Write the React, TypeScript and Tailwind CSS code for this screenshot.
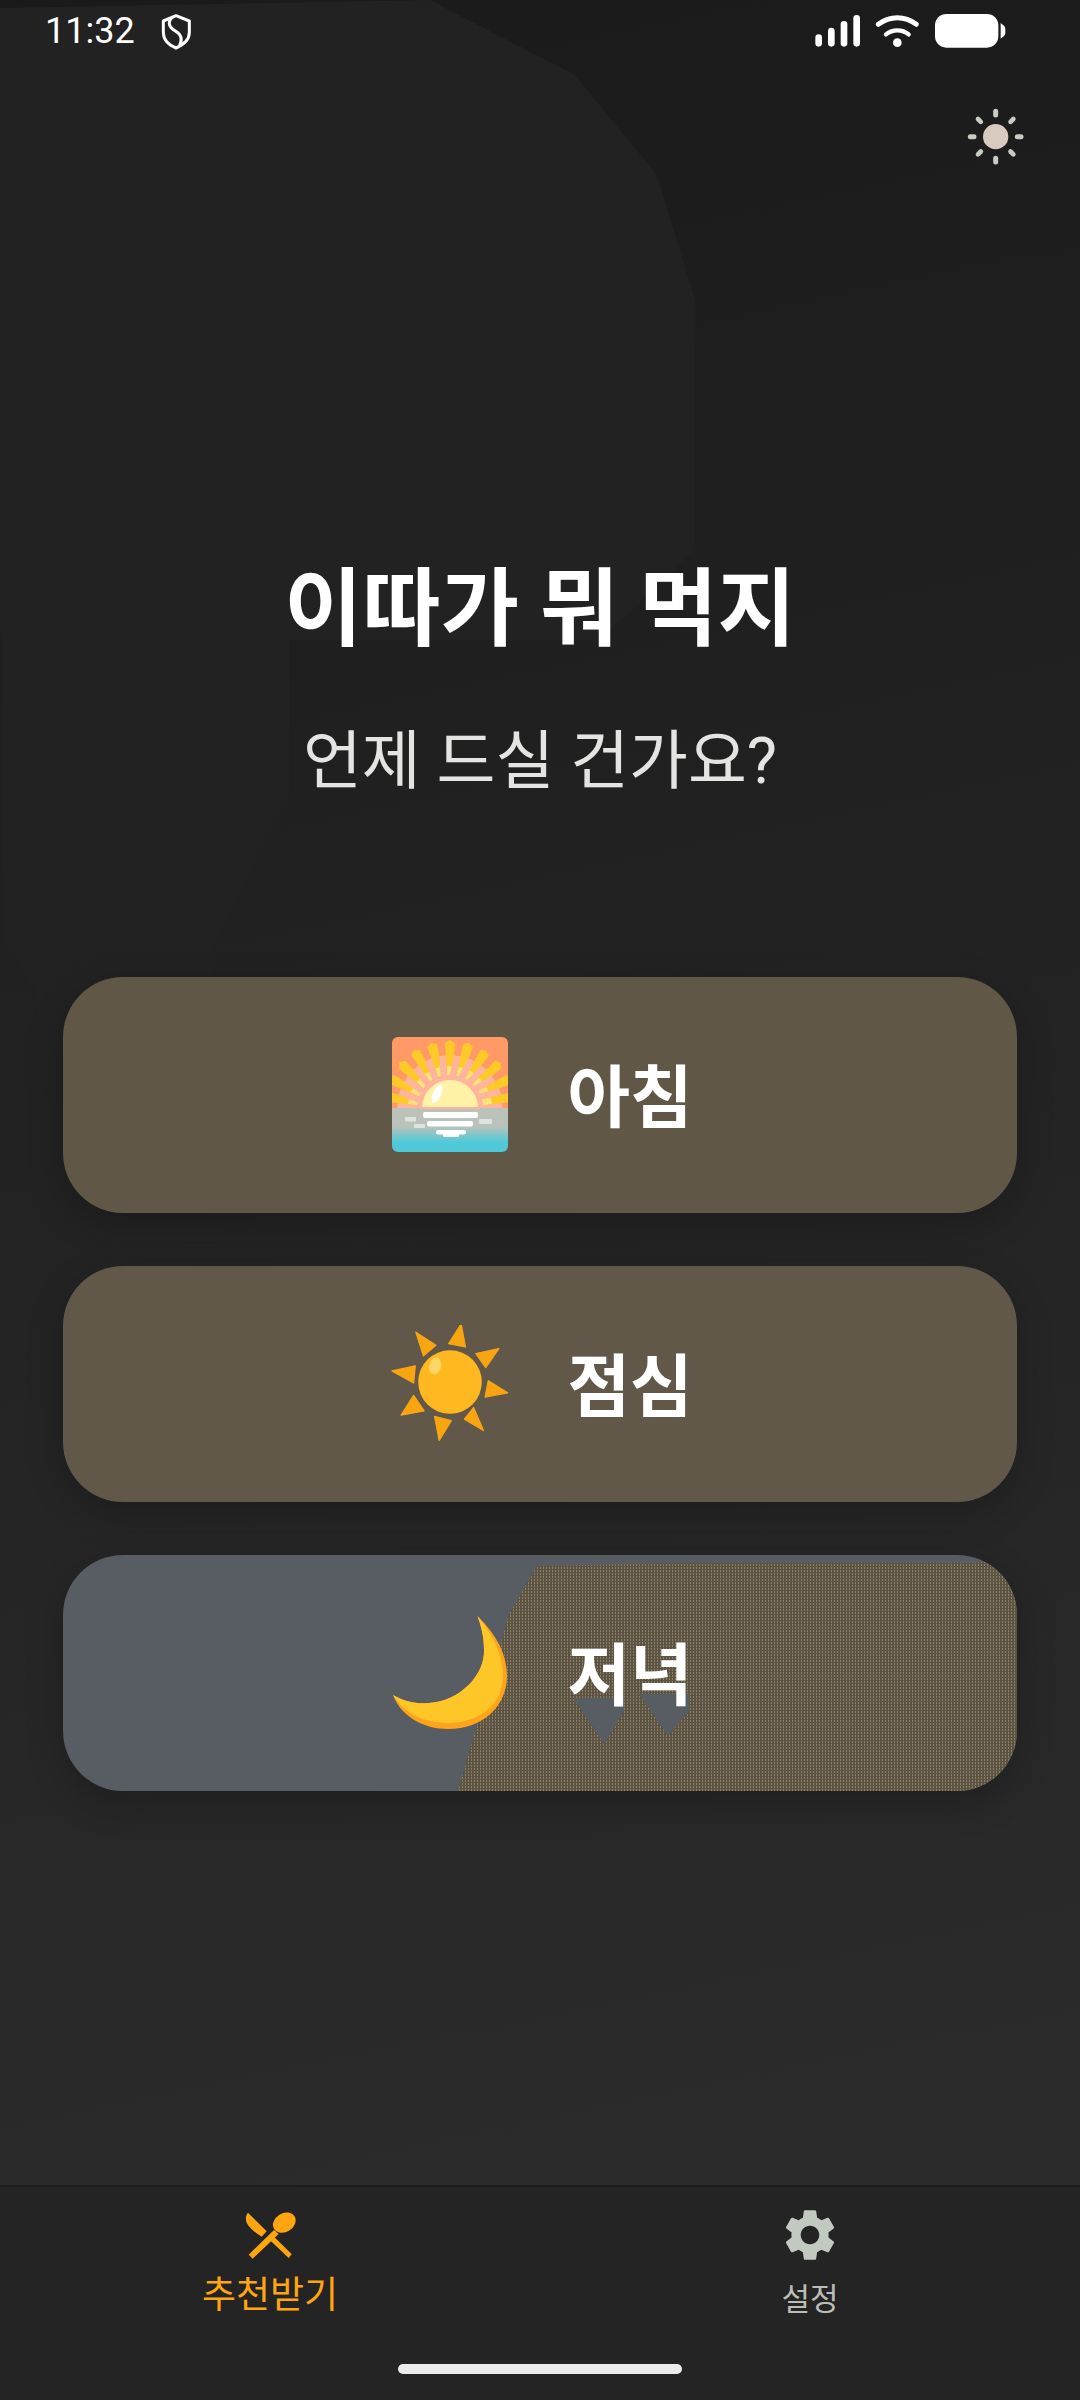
import React from "react";
import { MdSettings } from "react-icons/md";

const FONT = { fontFamily: 'Roboto, "Noto Sans CJK KR", sans-serif' };

function StatusBar() {
  return (
    <div className="relative flex h-[62px] items-center pl-[45px] pr-[60px] text-white">
      <span className="w-[105px] text-[36px] leading-none">11:32</span>
      <svg className="mt-[3px]" width="60" height="55" viewBox="0 0 180 165" fill="none" stroke="white" strokeWidth="9" strokeLinejoin="round">
        <path d="M78 32 L118 48 V82 C118 104 100 120 78 129 C56 120 40 104 40 82 V48 Z" />
        <path d="M68 36 C50 52 58 68 76 78 C94 88 98 104 88 124" />
      </svg>
      <div className="flex-1" />
      <svg className="mt-[3px]" width="220" height="55" viewBox="0 0 660 165">
        <g fill="white">
          <rect x="46" y="88" width="20" height="37" rx="10" />
          <rect x="84" y="68" width="20" height="57" rx="10" />
          <rect x="122" y="48" width="20" height="77" rx="10" />
          <rect x="160" y="30" width="20" height="95" rx="10" />
        </g>
        <g fill="none" stroke="white" strokeLinecap="round">
          <path d="M235 58 C270 32 314 32 349 58" strokeWidth="15" />
          <path d="M258 88 C278 72 306 72 326 88" strokeWidth="13" />
        </g>
        <circle cx="292" cy="113" r="13" fill="white" />
        <rect x="405" y="27" width="190" height="101" rx="34" fill="white" />
        <path d="M602 54 L612 62 Q616 66 616 72 V84 Q616 90 612 93 L602 101 Z" fill="white" />
      </svg>
    </div>
  );
}

function ThemeToggle() {
  const straight = [0, 90, 180, 270];
  const diag = [45, 135, 225, 315];
  return (
    <div className="mt-[33px] flex justify-end pr-[45px]">
      <svg width="80" height="80" viewBox="-122 -125 240 240">
        {straight.map((a) => (
          <line key={a} x1="0" y1="-65" x2="0" y2="-76" stroke="#c8ccc3" strokeWidth="15" strokeLinecap="round" transform={`rotate(${a})`} />
        ))}
        {diag.map((a) => (
          <line key={a} x1="0" y1="-63" x2="0" y2="-75" stroke="#c8ccc3" strokeWidth="14" strokeLinecap="round" transform={`rotate(${a})`} />
        ))}
        <circle r="38" fill="#d9cabf" />
      </svg>
    </div>
  );
}

function Sunrise() {
  const angles = [-80, -64, -48, -32, -16, 0, 16, 32, 48, 64, 80];
  return (
    <svg width="118" height="118" viewBox="-1 -1 118 118">
      <defs>
        <clipPath id="sr">
          <rect x="0" y="0" width="116" height="115" rx="6" />
        </clipPath>
        <linearGradient id="wa" x1="0" y1="0" x2="0" y2="1">
          <stop offset="0.42" stopColor="#bac2ba" />
          <stop offset="0.78" stopColor="#4fc9da" />
        </linearGradient>
      </defs>
      <g clipPath="url(#sr)">
        <rect width="116" height="72" fill="#ff9a66" />
        <circle cx="58" cy="71" r="33" fill="#ffb49c" />
        {angles.map((a) => (
          <g key={a} transform={`translate(58 71) rotate(${a})`}>
            <polygon points="-9,-30 9,-30 11,-52 -11,-52" fill="#ffb49c" />
            <polygon points="-3,-34 3,-34 5,-65 0,-68 -5,-65" fill="#ffc928" />
            <polygon points="-3,-33 3,-33 3,-42 -3,-42" fill="#ffe27a" />
          </g>
        ))}
        <rect x="0" y="71" width="116" height="44" fill="url(#wa)" />
        <path d="M29 71 A29 29 0 0 1 87 71 Z" fill="#fff2a6" stroke="#ffb49c" strokeWidth="2" />
        <ellipse cx="45" cy="57" rx="4" ry="10" transform="rotate(25 45 57)" fill="white" />
        <rect x="31" y="75" width="55" height="6" rx="2" fill="white" />
        <rect x="35" y="84" width="46" height="5.5" rx="2" fill="white" />
        <rect x="44" y="93" width="30" height="4.5" rx="2" fill="white" />
        <rect x="51" y="96" width="16" height="4" rx="1" fill="white" />
        <rect x="13" y="80" width="11" height="4.5" rx="1" fill="#dfe3df" />
        <rect x="22" y="87" width="11" height="4" rx="1" fill="#dfe3df" />
        <rect x="87" y="82" width="13" height="5" rx="1" fill="#dfe3df" />
      </g>
    </svg>
  );
}

function Sun() {
  const rays = [
    "305,970 267,1030 318,1040",
    "420,1045 350,1060 380,1103",
    "447,1180 388,1143 378,1193",
    "373,1295 343,1225 315,1260",
    "238,1325 275,1265 224,1252",
    "122,1248 192,1235 160,1188",
    "94,1113 165,1098 160,1150",
    "167,995 228,1035 190,1067",
  ];
  return (
    <svg width="118" height="118" viewBox="91 973 360 360">
      {rays.map((p) => (
        <polygon key={p} points={p} fill="#f9a511" stroke="#f9a511" strokeWidth="4" strokeLinejoin="round" />
      ))}
      <circle cx="271" cy="1147" r="97" fill="#ffb81f" />
      <ellipse cx="226" cy="1098" rx="18" ry="26" transform="rotate(15 226 1098)" fill="#ffd766" />
    </svg>
  );
}

function Moon() {
  return (
    <svg width="118" height="118" viewBox="-2 -2 118 118">
      <path
        d="M84.5 0 C105 20 114 40 114 60 C114 90 90 113 55 113 C30 113 8 100 0 79 C12 86 24 88 36 87 C68 85 92 58 91 34 C91 20 88 10 84.5 0 Z"
        fill="#ffa31a"
      />
      <path
        d="M84.5 0 C101 20 110 40 110 60 C110 88 87 107 55 107 C32 107 12 98 0 79 C12 86 24 88 36 87 C68 85 92 58 91 34 C91 20 88 10 84.5 0 Z"
        fill="#ffc627"
      />
    </svg>
  );
}

function Wedge() {
  return (
    <svg className="absolute inset-0" width="954" height="236" viewBox="0 0 954 236">
      <defs>
        <pattern id="dth" width="3" height="3" patternUnits="userSpaceOnUse">
          <rect width="3" height="3" fill="#5d5343" />
          <rect x="0" y="0" width="1" height="2" fill="#8a7f69" />
        </pattern>
      </defs>
      <path d="M474 11 L615 8 L954 7 V236 H395 L446 59 Z" fill="url(#dth)" />
      <polygon points="510,143 561,143 561,156 541,189" fill="#585c63" />
      <polygon points="576,139 626,139 626,156 605,181" fill="#585c63" />
    </svg>
  );
}

function MealCard({ label, bg, icon, wedge }: { label: string; bg: string; icon: React.ReactNode; wedge?: boolean }) {
  return (
    <div className={`relative flex h-[236px] items-center justify-center gap-[58px] overflow-hidden rounded-[60px] pl-[4px] shadow-[0_12px_36px_rgba(0,0,0,0.22)] ${bg}`}>
      {wedge && <Wedge />}
      <div className="relative h-[118px] w-[118px]">{icon}</div>
      <span className="relative mt-[8px] text-[68px] font-bold leading-none text-white">{label}</span>
    </div>
  );
}

function Cutlery() {
  return (
    <svg width="80" height="70" viewBox="0 0 240 210" fill="#ffa50f">
      <path d="M54 38 L110 94 L95 110 C75 98 58 84 50 68 C46 58 47 46 54 38 Z" />
      <path d="M126 106 L138 116 L185 162 L176 174 L117 118 Z" />
      <ellipse cx="163" cy="68" rx="36" ry="28" transform="rotate(-32 163 68)" />
      <path d="M132 90 L146 102 L68 176 L56 164 Z" />
    </svg>
  );
}

function BottomNav() {
  return (
    <div className="relative flex h-[215px] flex-col border-t-2 border-[#1c1c1c] bg-[#242424]">
      <div className="grid flex-1 grid-cols-2">
        <div className="flex flex-col items-center pt-[13px]">
          <Cutlery />
          <span className="mt-[4px] text-[37px] leading-[44px] text-[#ffa50f]">추천받기</span>
        </div>
        <div className="flex flex-col items-center pt-[17px]">
          <MdSettings size={62} color="#c1c9c1" />
          <span className="mt-[14px] text-[31px] leading-[40px] text-[#bdbdb8]">설정</span>
        </div>
      </div>
      <div className="mx-auto mb-[26px] h-[10px] w-[284px] rounded-full bg-[#ececec]" />
    </div>
  );
}

export default function App() {
  return (
    <div
      className="relative flex h-[2400px] w-[1080px] flex-col overflow-hidden bg-[linear-gradient(168deg,#1a1a1a,#2d2d2d)]"
      style={FONT}
    >
      <svg className="absolute inset-0" width="1080" height="2400" viewBox="0 0 1080 2400">
        <polygon
          points="0,8 430,0 575,75 657,175 695,300 695,550 600,640 289,640 289,795 213,945 213,980 38,1100 35,992 3,940 3,640 0,630"
          fill="#222222"
        />
      </svg>
      <StatusBar />
      <ThemeToggle />
      <main className="relative flex flex-1 flex-col">
        <h1 className="mt-[385px] text-center text-[85px] font-bold leading-[100px] text-white">이따가 뭐 먹지</h1>
        <p className="mt-[62px] text-center text-[64px] leading-[80px] text-[#e4e4e2]">언제 드실 건가요?</p>
        <div className="mx-[63px] mt-[175px] flex flex-col gap-[53px]">
          <MealCard label="아침" bg="bg-[#605747]" icon={<Sunrise />} />
          <MealCard label="점심" bg="bg-[#61584a]" icon={<Sun />} />
          <MealCard label="저녁" bg="bg-[#585c63]" icon={<Moon />} wedge />
        </div>
      </main>
      <BottomNav />
    </div>
  );
}
